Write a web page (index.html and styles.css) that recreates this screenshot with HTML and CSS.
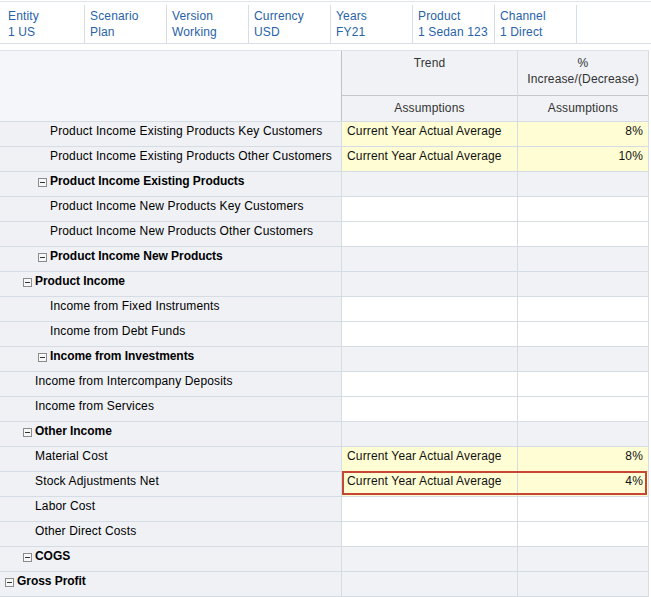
FILE: index.html
```html
<!DOCTYPE html>
<html>
<head>
<meta charset="utf-8">
<link rel="stylesheet" href="styles.css">
</head>
<body>
<div class="pov">
  <div class="pov-item first"><div>Entity</div><div>1 US</div></div>
  <div class="pov-item"><div>Scenario</div><div>Plan</div></div>
  <div class="pov-item"><div>Version</div><div>Working</div></div>
  <div class="pov-item"><div>Currency</div><div>USD</div></div>
  <div class="pov-item"><div>Years</div><div>FY21</div></div>
  <div class="pov-item"><div>Product</div><div>1 Sedan 123</div></div>
  <div class="pov-item last"><div>Channel</div><div>1 Direct</div></div>
</div>

<div class="grid">
  <div class="head">
    <div class="corner"></div>
    <div class="hcol c1">
      <div class="h1">Trend</div>
      <div class="h2">Assumptions</div>
    </div>
    <div class="hcol c2">
      <div class="h1">%<br>Increase/(Decrease)</div>
      <div class="h2">Assumptions</div>
    </div>
  </div>

  <div class="row">
    <div class="rh i50">Product Income Existing Products Key Customers</div>
    <div class="cell c1 edit">Current Year Actual Average</div>
    <div class="cell c2 edit num">8%</div>
  </div>
  <div class="row">
    <div class="rh i50">Product Income Existing Products Other Customers</div>
    <div class="cell c1 edit">Current Year Actual Average</div>
    <div class="cell c2 edit num">10%</div>
  </div>
  <div class="row">
    <div class="rh i38 parent"><span class="tog"></span>Product Income Existing Products</div>
    <div class="cell c1 ro"></div>
    <div class="cell c2 ro"></div>
  </div>
  <div class="row">
    <div class="rh i50">Product Income New Products Key Customers</div>
    <div class="cell c1"></div>
    <div class="cell c2"></div>
  </div>
  <div class="row">
    <div class="rh i50">Product Income New Products Other Customers</div>
    <div class="cell c1"></div>
    <div class="cell c2"></div>
  </div>
  <div class="row">
    <div class="rh i38 parent"><span class="tog"></span>Product Income New Products</div>
    <div class="cell c1 ro"></div>
    <div class="cell c2 ro"></div>
  </div>
  <div class="row">
    <div class="rh i23 parent"><span class="tog"></span>Product Income</div>
    <div class="cell c1 ro"></div>
    <div class="cell c2 ro"></div>
  </div>
  <div class="row">
    <div class="rh i50">Income from Fixed Instruments</div>
    <div class="cell c1"></div>
    <div class="cell c2"></div>
  </div>
  <div class="row">
    <div class="rh i50">Income from Debt Funds</div>
    <div class="cell c1"></div>
    <div class="cell c2"></div>
  </div>
  <div class="row">
    <div class="rh i38 parent"><span class="tog"></span>Income from Investments</div>
    <div class="cell c1 ro"></div>
    <div class="cell c2 ro"></div>
  </div>
  <div class="row">
    <div class="rh i35">Income from Intercompany Deposits</div>
    <div class="cell c1"></div>
    <div class="cell c2"></div>
  </div>
  <div class="row">
    <div class="rh i35">Income from Services</div>
    <div class="cell c1"></div>
    <div class="cell c2"></div>
  </div>
  <div class="row">
    <div class="rh i23 parent"><span class="tog"></span>Other Income</div>
    <div class="cell c1 ro"></div>
    <div class="cell c2 ro"></div>
  </div>
  <div class="row">
    <div class="rh i35">Material Cost</div>
    <div class="cell c1 edit">Current Year Actual Average</div>
    <div class="cell c2 edit num">8%</div>
  </div>
  <div class="row selected">
    <div class="rh i35">Stock Adjustments Net</div>
    <div class="cell c1 edit">Current Year Actual Average</div>
    <div class="cell c2 edit num">4%</div>
  </div>
  <div class="row">
    <div class="rh i35">Labor Cost</div>
    <div class="cell c1"></div>
    <div class="cell c2"></div>
  </div>
  <div class="row">
    <div class="rh i35">Other Direct Costs</div>
    <div class="cell c1"></div>
    <div class="cell c2"></div>
  </div>
  <div class="row">
    <div class="rh i23 parent"><span class="tog"></span>COGS</div>
    <div class="cell c1 ro"></div>
    <div class="cell c2 ro"></div>
  </div>
  <div class="row">
    <div class="rh i5 parent"><span class="tog"></span>Gross Profit</div>
    <div class="cell c1 ro"></div>
    <div class="cell c2 ro"></div>
  </div>
</div>
</body>
</html>
```

FILE: styles.css
```css
*, *::before, *::after { box-sizing: border-box; }

body {
  margin: 0;
  background: #ffffff;
  font-family: "Liberation Sans", Arial, sans-serif;
  font-size: 12px;
  line-height: 16px;
  letter-spacing: 0.15px;
  color: #000;
}

/* POV bar */
.pov {
  margin-top: 1px;
  height: 43px;
  border-top: 1px solid #dfe4ea;
  border-bottom: 1px solid #d9dfe6;
  display: flex;
  align-items: flex-start;
  padding-top: 3px;
}
.pov-item {
  width: 82px;
  height: 38px;
  border-left: 1px solid #d5dde6;
  padding: 3px 0 0 5px;
  color: #2862a8;
  white-space: nowrap;
}
.pov-item.first {
  width: 84px;
  border-left: none;
  padding-left: 8px;
}
.pov-item.last {
  width: 83px;
  border-right: 1px solid #d5dde6;
}

/* Grid */
.grid {
  margin-top: 6px;
  width: 649px;
  border-top: 1px solid #dde2e8;
  border-bottom: 1px solid #d5dce4;
}

.head {
  display: flex;
  height: 70px;
}
.corner {
  width: 341px;
  background: #f5f6f9;
}
.hcol {
  display: flex;
  flex-direction: column;
  background: #f0f2f5;
  color: #333;
  text-align: center;
}
.hcol.c1 {
  width: 176px;
  border-left: 1px solid #bfc3c7;
}
.hcol.c2 {
  width: 132px;
  border-left: 1px solid #d6dbe0;
  border-right: 1px solid #d6dbe0;
}
.h1 {
  height: 45px;
  padding-top: 4px;
  border-bottom: 1px solid #c4c8cc;
}
.h2 {
  height: 25px;
  padding-top: 4px;
}

.row {
  display: flex;
  height: 25px;
  border-top: 1px solid #d5dce4;
  position: relative;
}
.rh {
  width: 341px;
  background: #eff1f5;
  padding-top: 1px;
  white-space: nowrap;
  display: flex;
  align-items: flex-start;
}
.rh.parent {
  font-weight: bold;
  letter-spacing: -0.05px;
}
.i5 { padding-left: 5px; }
.i23 { padding-left: 23px; }
.i35 { padding-left: 35px; }
.i38 { padding-left: 38px; }
.i50 { padding-left: 50px; }

.tog {
  flex: none;
  width: 9px;
  height: 9px;
  margin: 5px 3px 0 0;
  border: 1px solid #8c8c8c;
  background: #f7f7f7;
  position: relative;
}
.tog::after {
  content: "";
  position: absolute;
  left: 1px;
  right: 1px;
  top: 3px;
  height: 1px;
  background: #333;
}

.cell {
  background: #ffffff;
  padding: 1px 5px 0 5px;
  color: #111;
  white-space: nowrap;
}
.cell.c1 {
  width: 176px;
  border-left: 1px solid #d5dce4;
}
.cell.c2 {
  width: 132px;
  border-left: 1px solid #d5dce4;
  border-right: 1px solid #d5dce4;
}
.cell.edit { background: #fffdd4; }
.cell.ro { background: #f0f2f5; }
.cell.num { text-align: right; padding-right: 5px; }

.row.selected::after {
  content: "";
  position: absolute;
  z-index: 2;
  left: 342px;
  width: 305px;
  top: -1px;
  height: 24px;
  border: 2px solid #c74634;
  pointer-events: none;
}
```
